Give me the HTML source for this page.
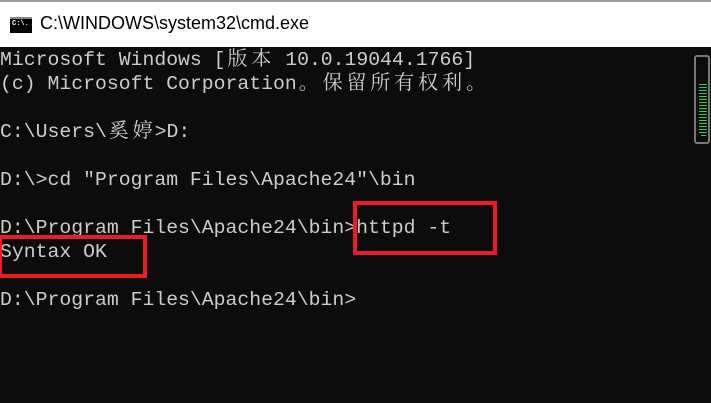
<!DOCTYPE html>
<html><head><meta charset="utf-8"><style>
body{margin:0;width:711px;height:403px;overflow:hidden;background:#0c0c0c;position:relative;font-family:"Liberation Sans",sans-serif}
.tb{position:absolute;left:0;top:0;width:711px;height:47px;background:#fff;border-top:2px solid #a0a0a0;box-sizing:border-box}
.tt{position:absolute;left:40px;top:11px;font-size:18px;color:#000}
.ic{position:absolute;left:10px;top:15px;width:22px;height:16px;background:#000;border-top:2px solid #888;box-sizing:border-box}
.ic span{position:absolute;left:2px;top:1px;color:#fff;font:bold 7px "Liberation Mono",monospace}
.l{position:absolute;left:0;font-family:"Liberation Mono","Noto Serif CJK SC",monospace;font-size:19.8px;letter-spacing:0;color:#cccccc;line-height:24px;white-space:pre}
.c{letter-spacing:0;display:inline-block;width:23.9px;text-align:center;font-size:20px}
.box{position:absolute;border:4px solid #ed1c24;box-sizing:border-box}
.sb{position:absolute;left:694px;top:55px;width:16px;height:89px;border:2px solid #777;border-radius:3px;box-sizing:border-box}
.g{position:absolute;left:3px;width:8px;height:1px;background:#2ecc55}
</style></head><body>
<div class="tb"><div class="ic"><span>C:\.</span></div><div class="tt">C:\WINDOWS\system32\cmd.exe</div></div>
<div class="l" style="top:48px">Microsoft Windows [<span class="c">版</span><span class="c">本</span> 10.0.19044.1766]</div>
<div class="l" style="top:72px">(c) Microsoft Corporation<span class="c">。</span><span class="c">保</span><span class="c">留</span><span class="c">所</span><span class="c">有</span><span class="c">权</span><span class="c">利</span><span class="c">。</span></div>
<div class="l" style="top:120px">C:\Users\<span class="c">奚</span><span class="c">婷</span>&gt;D:</div>
<div class="l" style="top:168px">D:\&gt;cd "Program Files\Apache24"\bin</div>
<div class="l" style="top:216px">D:\Program Files\Apache24\bin&gt;httpd -t</div>
<div class="l" style="top:240px">Syntax OK</div>
<div class="l" style="top:288px">D:\Program Files\Apache24\bin&gt;</div>
<div class="box" style="left:353px;top:201px;width:144px;height:54px"></div>
<div class="box" style="left:-2px;top:235px;width:149px;height:43px"></div>
<div class="sb">
<div class="g" style="top:27px"></div><div class="g" style="top:30px"></div><div class="g" style="top:33px"></div><div class="g" style="top:36px"></div><div class="g" style="top:39px"></div><div class="g" style="top:42px"></div><div class="g" style="top:45px"></div><div class="g" style="top:48px"></div><div class="g" style="top:51px"></div><div class="g" style="top:54px"></div><div class="g" style="top:57px"></div><div class="g" style="top:60px"></div><div class="g" style="top:63px"></div><div class="g" style="top:66px"></div><div class="g" style="top:69px"></div><div class="g" style="top:72px"></div><div class="g" style="top:75px"></div><div class="g" style="top:78px;left:5px;width:5px"></div>
</div>
</body></html>
